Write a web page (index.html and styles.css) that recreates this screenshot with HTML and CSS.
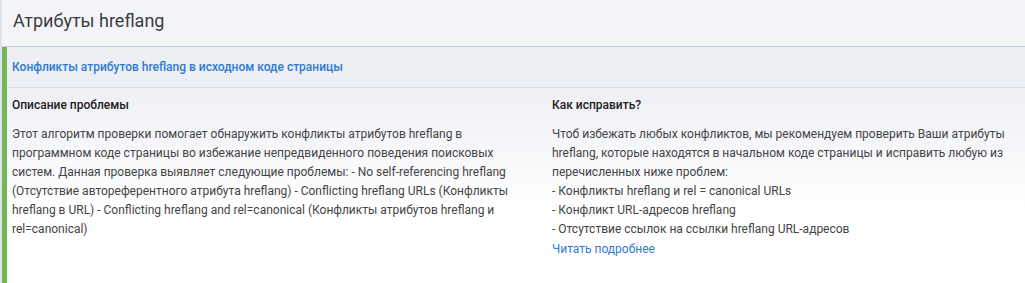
FILE: index.html
```html
<!DOCTYPE html>
<html lang="ru">
<head>
<meta charset="utf-8">
<link rel="stylesheet" href="styles.css">
</head>
<body>
<div class="page">
  <div class="header"><h1 class="title">Атрибуты hreflang</h1></div>
  <div class="issue">
    <div class="issue-head"><a class="issue-link" href="#">Конфликты атрибутов hreflang в исходном коде страницы</a></div>
    <div class="issue-body">
      <div class="col col-left">
        <h2 class="col-title">Описание проблемы</h2>
        <p class="col-text">Этот алгоритм проверки помогает обнаружить конфликты атрибутов hreflang в программном коде страницы во избежание непредвиденного поведения поисковых систем. Данная проверка выявляет следующие проблемы: - No self-referencing hreflang (Отсутствие автореферентного атрибута hreflang) - Conflicting hreflang URLs (Конфликты hreflang в URL) - Conflicting hreflang and rel=canonical (Конфликты атрибутов hreflang и rel=canonical)</p>
      </div>
      <div class="col col-right">
        <h2 class="col-title">Как исправить?</h2>
        <p class="col-text">Чтоб избежать любых конфликтов, мы рекомендуем проверить Ваши атрибуты hreflang, которые находятся в начальном коде страницы и исправить любую из перечисленных ниже проблем:<br>- Конфликты hreflang и rel = canonical URLs<br>- Конфликт URL-адресов hreflang<br>- Отсутствие ссылок на ссылки hreflang URL-адресов</p>
        <a class="more" href="#">Читать подробнее</a>
      </div>
    </div>
  </div>
  <div class="next-row"><span class="next-cell"></span></div>
</div>
</body>
</html>
```

FILE: styles.css
```css
html, body {
  margin: 0;
  padding: 0;
  background: #ffffff;
}
body {
  font-family: Roboto, "Noto Sans", Arial, sans-serif;
  color: #333;
}
.page {
  border-left: 2px solid #dfe4ec;
}
.header {
  height: 46px;
  background: #f3f4f8;
  border-bottom: 1px solid #c9d3e3;
  display: flex;
  align-items: center;
  padding-left: 11px;
  box-sizing: border-box;
  height: 47px;
}
.title {
  margin: 0;
  font-size: 18px;
  font-weight: 400;
  color: #3b3b3f;
  position: relative;
  top: -3px;
}
.issue {
  border-left: 5px solid #72b85a;
}
.issue-head {
  height: 41px;
  box-sizing: border-box;
  background: #eceff4;
  border-bottom: 1px solid #d7dde8;
  display: flex;
  align-items: center;
  padding-left: 5px;
}
.issue-link {
  font-size: 12px;
  font-weight: 500;
  color: #2f7bcf;
  text-decoration: none;
  position: relative;
  top: 0px;
}
.issue-body {
  display: grid;
  grid-template-columns: 540px 1fr;
  padding: 9px 10px 0 5px;
  height: 192px;
  background: linear-gradient(#eef0f5 0%, #ffffff 60%);
}
.col-left {
  padding-right: 20px;
}
.col-right {
  padding-right: 10px;
}
.col-title {
  margin: 0;
  font-size: 12px;
  font-weight: 500;
  color: #222;
  line-height: 17px;
}
.col-text {
  margin: 11px 0 0;
  font-size: 12px;
  line-height: 19px;
  color: #444;
}
.more {
  display: block;
  font-size: 12px;
  line-height: 20px;
  color: #2f7bcf;
  text-decoration: none;
}
.next-row {
  height: 3px;
  margin-left: 5px;
  background: #eef0f4;
  padding-left: 32px;
}
.next-cell {
  display: block;
  width: 1px;
  height: 3px;
  background: #d0d6df;
}
```
